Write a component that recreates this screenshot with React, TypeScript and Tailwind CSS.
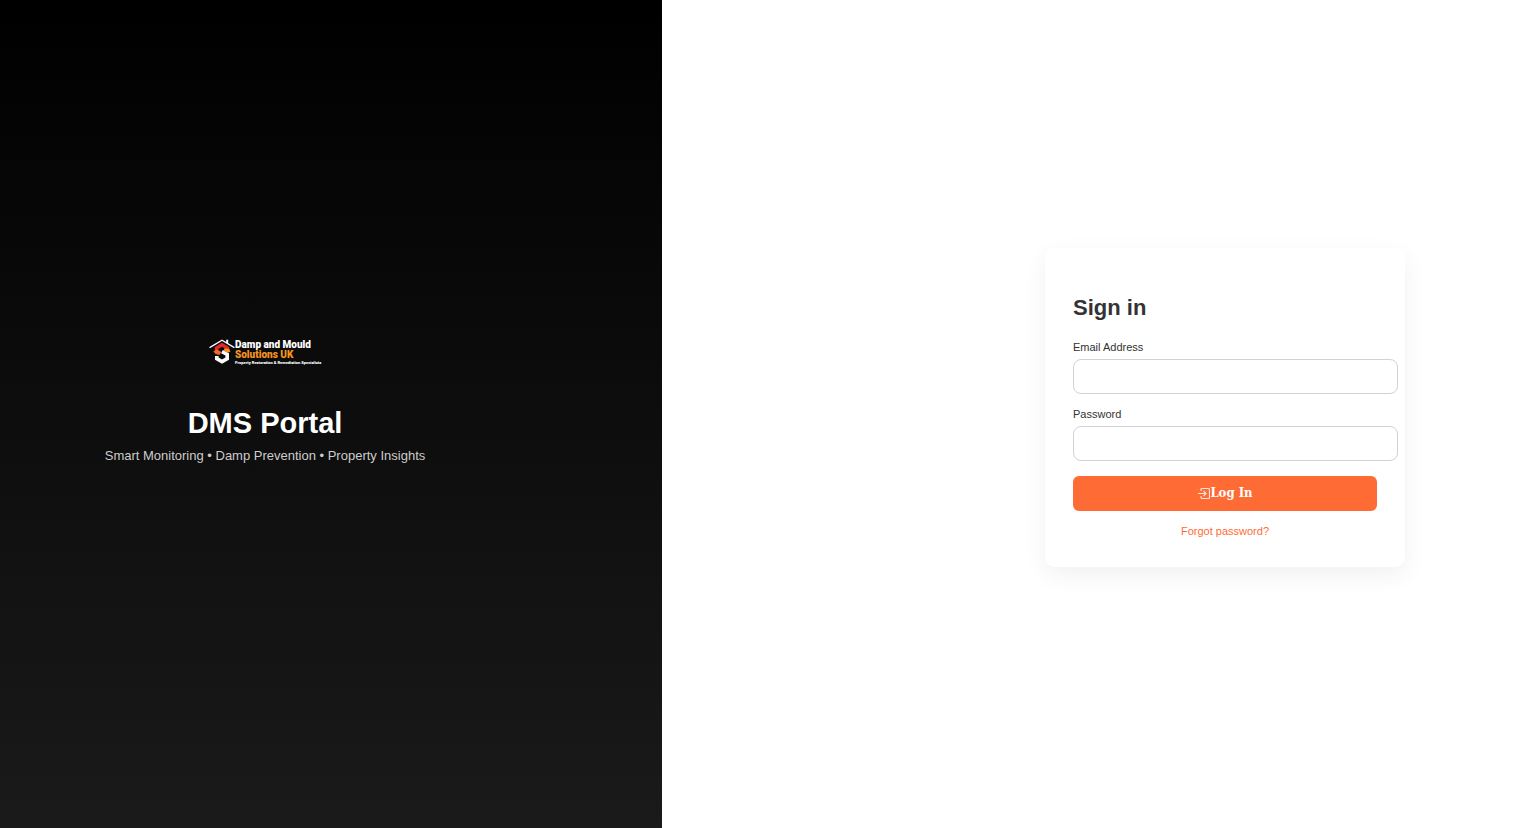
function HouseMark() {
  return (
    <svg viewBox="0 0 26 26" className="h-[26px] w-[26px] shrink-0" fill="none" aria-hidden="true">
      <path d="M0.6 8.6 L13 1.2 L25.4 8.6" stroke="#ffffff" strokeWidth="1.3" />
      <path d="M17.2 0.8h2v4.2l-2-1.2z" fill="#ffffff" />
      <path d="M13 12.6 L18.2 15.4 V19.6 L13 22.6 L7.8 19.6 V17" stroke="#ffffff" strokeWidth="3.6" />
      <path d="M7.6 11.6 V9 L13 5.8 L18.4 9 V11" stroke="#e5252a" strokeWidth="3.6" />
      <path d="M4.4 12.6 L7.4 10.2 L12.6 13 L10.4 16 L6.6 15 Z" fill="#f26522" />
      <path d="M15 9.4 L20.2 9.8 L21.4 12.8 L18.6 13.8 L15.2 12 Z" fill="#f7941d" />
    </svg>
  );
}

function Logo() {
  return (
    <div className="flex h-[26px] w-[112px] items-center whitespace-nowrap font-['Roboto','Liberation_Sans',sans-serif] font-black text-white">
      <HouseMark />
      <div className="flex flex-col">
        <span className="text-[10px] leading-[10px]">Damp and Mould</span>
        <span className="text-[10px] leading-[10px] text-[#f7941d]">Solutions UK</span>
        <span className="text-[4px] leading-[5px]">Property Restoration &amp; Remediation Specialists</span>
      </div>
    </div>
  );
}

function LoginIcon() {
  return (
    <svg viewBox="0 0 13 13" className="h-[13px] w-[13px] shrink-0 opacity-80" fill="none" stroke="currentColor" strokeWidth="1.2" aria-hidden="true">
      <path d="M4 4V2.5Q4 1.5 5 1.5H11.5Q12.5 1.5 12.5 2.5V10.5Q12.5 11.5 11.5 11.5H5Q4 11.5 4 10.5V9" />
      <path d="M1 6.5H9M6.5 4L9 6.5L6.5 9" />
    </svg>
  );
}

function Field({ id, label, type }: { id: string; label: string; type: string }) {
  return (
    <div className="flex flex-col gap-1">
      <label htmlFor={id} className="text-[11px] leading-[15px] text-[#333333]">
        {label}
      </label>
      <input
        id={id}
        name={id}
        type={type}
        className="h-[35px] w-[calc(100%+21px)] rounded-lg border border-[#d1d1db] bg-white px-2.5 text-[13px] outline-none focus:border-[#ff6b35]"
      />
    </div>
  );
}

export default function App() {
  return (
    <div className="flex min-h-screen bg-white font-['Liberation_Sans',Arial,sans-serif]">
      <section className="flex w-[43.07%] flex-col items-center justify-center bg-[linear-gradient(to_bottom,#000000,#1a1a1a)] pr-[132px] pb-[22px]">
        <Logo />
        <h1 className="mt-9 text-[29px] leading-[44px] font-bold text-white">DMS Portal</h1>
        <p className="text-[13px] leading-[22px] text-[#cccccc]">
          Smart Monitoring • Damp Prevention • Property Insights
        </p>
      </section>
      <main className="flex flex-1 items-center justify-end pr-[132px] pb-3.5">
        <form
          onSubmit={(event) => event.preventDefault()}
          className="w-full max-w-[360px] rounded-[10px] bg-white p-7 shadow-[0_8px_24px_rgba(0,0,0,0.06)]"
        >
          <h2 className="mt-[15px] mb-4 text-[22px] leading-[33px] font-bold text-[#333333]">Sign in</h2>
          <div className="flex flex-col gap-[13px]">
            <Field id="email" label="Email Address" type="email" />
            <Field id="password" label="Password" type="password" />
          </div>
          <button
            type="submit"
            className="mt-[15px] flex h-[35px] w-full cursor-pointer items-center justify-center rounded-md bg-[#ff6b35] font-['DejaVu_Serif_Condensed','DejaVu_Serif',serif] text-[13px] font-bold text-white"
          >
            <LoginIcon />
            Log In
          </button>
          <div className="mt-3 text-center text-[11px] leading-[16px]">
            <a href="#forgot" className="text-[#ff6b35]">Forgot password?</a>
          </div>
        </form>
      </main>
    </div>
  );
}
